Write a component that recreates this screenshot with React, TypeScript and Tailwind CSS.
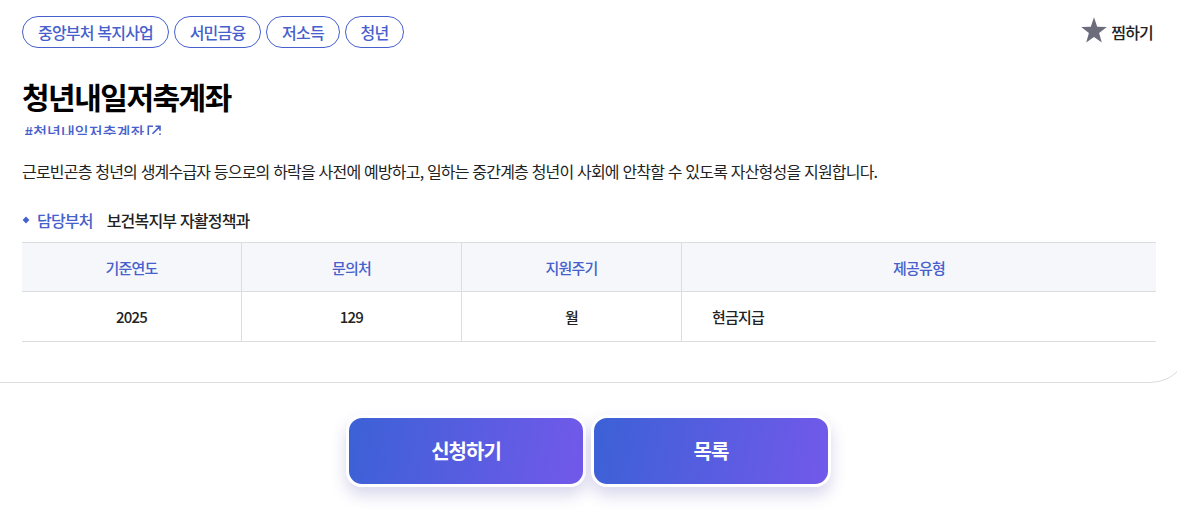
const tags = ['중앙부처 복지사업', '서민금융', '저소득', '청년'];

function Star() {
  return (
    <svg width="26" height="26" viewBox="0 0 26 26" fill="#6b6d7c" aria-hidden="true">
      <path d="M13 .3 16.2 9.7 25.8 9.9 18.1 15.9 20.8 25.5 13 19.9 5.2 25.5 7.9 15.9 .2 9.9 9.8 9.7Z" />
    </svg>
  );
}

function OpenLink() {
  return (
    <svg width="14" height="14" viewBox="0 0 14 14" fill="none" stroke="#4660cc" strokeWidth="1.6" aria-hidden="true">
      <path d="M6 1.3H1.3V13.2H13V8.5M8.5 1.3H13V5.8M12.7 1.6 5.5 8.8" />
    </svg>
  );
}

function ActionButton({ label }: { label: string }) {
  return (
    <button className="h-[72px] w-[240px] rounded-[16px] border-[3px] border-white bg-[linear-gradient(100deg,#3b61d6_0%,#7359ea_100%)] bg-origin-border text-[20px] font-bold tracking-[-0.05em] text-white shadow-[0_8px_16px_rgba(60,50,160,0.2)]">
      {label}
    </button>
  );
}

export default function App() {
  return (
    <div className="h-[512px] w-full overflow-hidden bg-white font-['Noto_Sans_CJK_KR',sans-serif] text-[16px] leading-6 font-medium tracking-[-0.05em] [word-spacing:0.85px] text-[#222]">
      <section className="h-[383px] w-[1190px] rounded-br-[40px] border-r border-b border-[#dedee2] pt-4 pl-[22px]">
        <div className="w-[1134px]">
          <div className="flex h-8 items-center justify-between">
            <ul className="flex gap-[4.7px]">
              {tags.map((tag) => (
                <li key={tag} className="flex h-8 items-center rounded-full border border-[#4660cc] px-[15px] text-[#4660cc]">
                  {tag}
                </li>
              ))}
            </ul>
            <button className="flex items-center gap-[4px] pr-[3px]">
              <span className="-mt-1"><Star /></span>
              <span>찜하기</span>
            </button>
          </div>
          <h1 className="mt-[26px] h-[44px] text-[30px] leading-[44px] font-bold tracking-[-0.05em] text-black">청년내일저축계좌</h1>
          <a className="mt-[4px] ml-[2.5px] flex h-[13px] items-start gap-[3px] overflow-hidden text-[15px] leading-[20px] text-[#4660cc]">
            <span className="tracking-[0.1px]">#청년내일저축계좌</span>
            <span className="mt-[3px]"><OpenLink /></span>
          </a>
          <p className="mt-[24px] h-6 font-normal">
            근로빈곤층 청년의 생계수급자 등으로의 하락을 사전에 예방하고, 일하는 중간계층 청년이 사회에 안착할 수 있도록 자산형성을 지원합니다.
          </p>
          <div className="mt-[25px] flex h-6 items-center">
            <svg width="8" height="8" viewBox="0 0 8 8" fill="#4660cc" aria-hidden="true"><path d="M4 .6 7.4 4 4 7.4 .6 4Z" /></svg>
            <span className="ml-[7px] text-[#4660cc]">담당부처</span>
            <span className="ml-[14px]">보건복지부 자활정책과</span>
          </div>
          <table className="mt-[10px] w-full table-fixed border-separate border-spacing-0 border-t border-[#dcdde1] text-[15px]">
            <colgroup>
              <col className="w-[220px]" />
              <col className="w-[220px]" />
              <col className="w-[220px]" />
              <col />
            </colgroup>
            <thead className="bg-[#f5f7fb] text-[#4660cc]">
              <tr className="h-[49px]">
                {['기준연도', '문의처', '지원주기', '제공유형'].map((h) => (
                  <th key={h} className="border-r border-b border-[#dcdde1] p-0 pt-[2px] font-medium last:border-r-0">{h}</th>
                ))}
              </tr>
            </thead>
            <tbody>
              <tr className="h-[50px] text-center">
                <td className="border-r border-b border-[#dcdde1] p-0">2025</td>
                <td className="border-r border-b border-[#dcdde1] p-0">129</td>
                <td className="border-r border-b border-[#dcdde1] p-0">월</td>
                <td className="border-b border-[#dcdde1] p-0 pl-[30px] text-left">현금지급</td>
              </tr>
            </tbody>
          </table>
        </div>
      </section>
      <div className="mt-8 ml-[346px] flex gap-[5px]">
        <ActionButton label="신청하기" />
        <ActionButton label="목록" />
      </div>
    </div>
  );
}
